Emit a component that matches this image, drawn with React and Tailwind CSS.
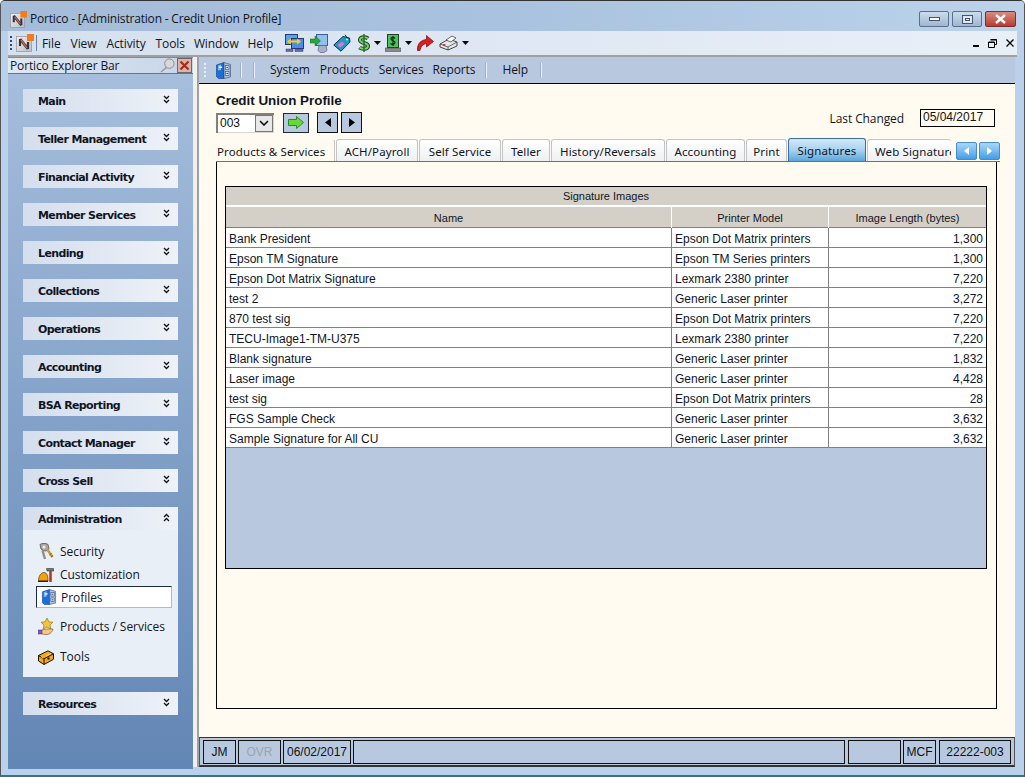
import React from "react";

const Logo = ({ s = 17 }) => (
  <svg width={s} height={s} viewBox="0 0 18 18" className="shrink-0">
    <defs>
      <linearGradient id="lg" x1="0" y1="0" x2="1" y2="1">
        <stop offset="0" stopColor="#f4f2ee" />
        <stop offset="1" stopColor="#b9bcc4" />
      </linearGradient>
    </defs>
    <rect x="0.500" y="2.500" width="15" height="15" fill="url(#lg)" stroke="#8f939c" strokeWidth="0.7" />
    <rect x="11" y="0" width="7" height="7" fill="#f47a1c" />
    <path d="M4 5v7M12 8v7" stroke="#2a3350" strokeWidth="2.200" />
    <path d="M4 5l8 10" stroke="#2a3350" strokeWidth="2.800" />
    <path d="M5 6l6 8" stroke="#e8641c" strokeWidth="1.300" />
  </svg>
);

const Cabinet = ({ s = 17 }) => (
  <svg width={s} height={s} viewBox="0 0 15 17" className="shrink-0">
    <path d="M0.500 3L8 0.500V16.500H2.500L0.500 14.500z" fill="#1b6fd8" stroke="#0d3c8c" strokeWidth="0.6" />
    <path d="M2 3.500L5 2.500V8L2 8.500z" fill="#7db8f4" />
    <path d="M8 0.500L14.500 2.500V15L8 16.500z" fill="#aebfd8" stroke="#2f4a7c" strokeWidth="0.6" />
    <rect x="3" y="4.500" width="3" height="1.500" fill="#eaf3ff" />
    <rect x="9.500" y="3.500" width="3.500" height="4" fill="#d8e0ee" stroke="#2f4a7c" strokeWidth="0.6" />
    <rect x="9.500" y="9.500" width="3.500" height="4" fill="#d8e0ee" stroke="#2f4a7c" strokeWidth="0.6" />
    <rect x="10.500" y="5" width="1.500" height="1" fill="#2f4a7c" />
    <rect x="10.500" y="11" width="1.500" height="1" fill="#2f4a7c" />
  </svg>
);

const Keys = () => (
  <svg width="15" height="17" viewBox="0 0 15 17" className="shrink-0">
    <path d="M1 1.500C3 0 7 0 9 1.500L10 6 7 8 4 7.500 2 6z" fill="#a8a8a4" stroke="#6a6a66" strokeWidth="1" />
    <circle cx="5" cy="4" r="1.500" fill="#f0f0ec" />
    <path d="M3.500 7.500L6 16" stroke="#8e8e8a" strokeWidth="2.400" />
    <path d="M8 6l5.500 8" stroke="#c79a34" strokeWidth="2.600" />
    <path d="M12 14l2-1.500M10.500 12l2-1.500" stroke="#7a5c18" strokeWidth="1" />
  </svg>
);

const HatHammer = () => (
  <svg width="16" height="14" viewBox="0 0 16 14" className="shrink-0">
    <path d="M0.500 13C0.500 8 3 4.500 6 4.500S10 8 10 13z" fill="#f2a20c" stroke="#5c3a00" strokeWidth="0.7" />
    <path d="M0 13.300h10" stroke="#2a1a00" strokeWidth="1.300" />
    <path d="M8.500 0.500H15.500L16 3H9z" fill="#77777a" stroke="#222" strokeWidth="0.5" />
    <path d="M12.500 3v11" stroke="#c8321c" strokeWidth="2.600" />
  </svg>
);

const StarHand = () => (
  <svg width="16" height="17" viewBox="0 0 16 17" className="shrink-0">
    <path d="M9 0l1.900 3.800 4.100.4-3 2.800.9 4.100L9 9l-3.900 2.100.9-4.100-3-2.800 4.100-.4z" fill="#f2c53a" stroke="#8a6a10" strokeWidth="0.6" />
    <rect x="0" y="12" width="4" height="4" fill="#7a5cd0" stroke="#443088" strokeWidth="0.5" />
    <path d="M4 12c3-1 6-1 11-1-1 4-4 5.500-7 5.500-2 0-3-.5-4-.5z" fill="#f6c98a" stroke="#8a5a20" strokeWidth="0.7" />
  </svg>
);

const ToolBox = () => (
  <svg width="16" height="15" viewBox="0 0 16 15" className="shrink-0">
    <path d="M0.500 5.500L10 0.800l5.500 3v5.500L6 14.500 0.500 11z" fill="#f2a818" stroke="#1a1206" strokeWidth="1" />
    <path d="M0.500 5.500L6 8.800l9.500-5M6 8.800v5.700" fill="none" stroke="#1a1206" strokeWidth="1" />
    <path d="M3 6.500L5.500 8M8 6l5-2.500" stroke="#fbe48a" strokeWidth="0.8" />
    <rect x="9.500" y="7.500" width="2" height="2" fill="#1a1206" />
  </svg>
);

const Monitors = () => (
  <svg width="19" height="18" viewBox="0 0 19 18">
    <rect x="0.500" y="0.500" width="12" height="10" fill="#5aa2ee" stroke="#243a78" />
    <rect x="6.500" y="4.500" width="12" height="10" fill="#4f8de0" stroke="#243a78" />
    <path d="M1 15h7v2.500H1zM10 15h8v2.500h-8z" fill="#6a6ea8" stroke="#3a3c78" strokeWidth="0.5" />
    <path d="M3 7.500h12" stroke="#f5d020" strokeWidth="2" />
    <path d="M6 4.500L2 7.500 6 10.500zM12 4.500l4 3-4 3z" fill="#f5d020" />
  </svg>
);
const ArrowMon = () => (
  <svg width="18" height="19" viewBox="0 0 18 19">
    <rect x="6.500" y="0.500" width="11" height="11" fill="#8fc0ee" stroke="#38609c" />
    <path d="M9 11.500h7l1 5-3 2h-4l-2-2z" fill="#a8aecb" stroke="#5a6088" strokeWidth="0.7" />
    <path d="M0 5h5V2l5.500 5-5.500 5V9H0z" fill="#28a838" stroke="#126020" strokeWidth="0.5" />
  </svg>
);
const Tag = () => (
  <svg width="18" height="18" viewBox="0 0 18 18">
    <path d="M0.800 11L10 2.500l6.500 1.500L17 8l-9 9.200z" fill="#1a9ac8" stroke="#0c3050" />
    <path d="M4.500 11l4.500-3.500 2.500 2.500-4.500 3.500z" fill="#f070c0" />
    <path d="M12 0.800l3 4" stroke="#222" fill="none" />
    <circle cx="14" cy="5.500" r="1" fill="#e0f0ff" />
  </svg>
);
const Dollar = () => (
  <svg width="12" height="18" viewBox="0 0 12 18">
    <path d="M10 4.500C8 2.500 2 2.500 2 6s8 2.500 8 6-6 3.500-8.500 1.500" fill="none" stroke="#1c3a24" strokeWidth="4" />
    <path d="M10 4.500C8 2.500 2 2.500 2 6s8 2.500 8 6-6 3.500-8.500 1.500" fill="none" stroke="#66dc58" strokeWidth="2" />
    <path d="M6 0v18" stroke="#2f6a34" strokeWidth="1.500" />
  </svg>
);
const Register = () => (
  <svg width="16" height="18" viewBox="0 0 16 18">
    <rect x="2.500" y="0.500" width="11" height="13" fill="#4ec060" stroke="#20402a" />
    <rect x="0" y="14" width="16" height="3.500" fill="#8a8a8a" stroke="#444" strokeWidth="0.5" />
    <path d="M10 4.500C9 3 6 3 6 5s4 1.500 4 3.500-3 2.500-4.500 1M8 2v10" fill="none" stroke="#0a2a12" strokeWidth="1.200" />
  </svg>
);
const RedArrow = () => (
  <svg width="17" height="16" viewBox="0 0 17 16">
    <path d="M0.500 15.500C0 8.500 4 5 9.500 4.500V0.500L16.500 6.500 9.500 12V8.500C6 9 4 11 3 15.500z" fill="#d81e1e" stroke="#7a0c0c" strokeWidth="0.7" />
  </svg>
);
const Printer = () => (
  <svg width="19" height="16" viewBox="0 0 19 16">
    <path d="M1 9l9-5 8 3v4l-9 4-8-3z" fill="#e8e8e8" stroke="#333" strokeWidth="0.9" />
    <path d="M7 5l6-4 4 2-5 4z" fill="#fff" stroke="#444" strokeWidth="0.8" />
    <rect x="4" y="9" width="2.500" height="1.500" fill="#e83a3a" />
    <path d="M1 9l8 3 9-5M9 12v3" fill="none" stroke="#444" strokeWidth="0.8" />
  </svg>
);

const Caret = () => (
  <svg width="7" height="4" viewBox="0 0 7 4" className="ml-[4px]"><path d="M0 0h7L3.500 4z" fill="#000" /></svg>
);

const Chev = ({ up }) => (
  <svg width="7" height="9" viewBox="0 0 7 9" className={`mb-[2px] ${up ? "rotate-180" : ""}`}>
    <path d="M1 1l2.500 2.500L6 1M1 5l2.500 2.500L6 5" fill="none" stroke="#111" strokeWidth="1.300" />
  </svg>
);

const Grip = ({ c = "#2c4a80" }) => (
  <div className="flex flex-col gap-[2px] shrink-0">
    {[0, 1, 2, 3].map((i) => (
      <div key={i} className="w-[2px] h-[2px]" style={{ background: c }} />
    ))}
  </div>
);

const Sep = ({ cls = "" }) => <div className={`w-[2px] h-[15px] bg-[#e8eef6] border-l border-[#9db0c8] shrink-0 ${cls}`} />;

const GroupLabel = ({ t }) => (
  <span className="pt-[3px] font-['DejaVu_Sans'] font-bold text-[11px] tracking-[-0.62px] text-[#10151f]">{t}</span>
);

const Group = ({ t }) => (
  <div className="h-[23px] flex items-center justify-between pl-[15px] pr-[8px] bg-gradient-to-r from-[#d4deed] to-[#eef2f8]">
    <GroupLabel t={t} />
    <Chev />
  </div>
);

const Item = ({ icon, t, h }) => (
  <div className={`flex items-center gap-[6px] pl-[15px] ${h}`}>
    <div className="w-[16px] flex justify-center shrink-0">{icon}</div>
    <span className="text-[12px] text-[#10151f] font-['Open_Sans'] tracking-[-0.05px]">{t}</span>
  </div>
);

const rows = [
  ["Bank President", "Epson Dot Matrix printers", "1,300"],
  ["Epson TM Signature", "Epson TM Series printers", "1,300"],
  ["Epson Dot Matrix Signature", "Lexmark 2380 printer", "7,220"],
  ["test 2", "Generic Laser printer", "3,272"],
  ["870 test sig", "Epson Dot Matrix printers", "7,220"],
  ["TECU-Image1-TM-U375", "Lexmark 2380 printer", "7,220"],
  ["Blank signature", "Generic Laser printer", "1,832"],
  ["Laser image", "Generic Laser printer", "4,428"],
  ["test sig", "Epson Dot Matrix printers", "28"],
  ["FGS Sample Check", "Generic Laser printer", "3,632"],
  ["Sample Signature for All CU", "Generic Laser printer", "3,632"],
];

const tabs = [
  ["Products & Services", "w-[119px]"],
  ["ACH/Payroll", "w-[82px]"],
  ["Self Service", "w-[82px]"],
  ["Teller", "w-[48px]"],
  ["History/Reversals", "w-[114px]"],
  ["Accounting", "w-[79px]"],
  ["Print", "w-[41px]"],
];

const WinBtn = ({ w, cls, children }) => (
  <div className={`h-[16px] ${w} ${cls} rounded-[2px] border border-[#5a6f8c] flex items-center justify-center`}>{children}</div>
);

const Cell = ({ w, children, cls = "" }) => (
  <div className={`h-[24px] ${w} border border-[#111] flex items-center justify-center text-[12px] shrink-0 ${cls}`}>{children}</div>
);

const gridCols = "grid grid-cols-[446px_157px_157px]";

export default function App() {
  return (
    <div className="w-[1025px] h-[777px] overflow-hidden rounded-t-[5px] flex flex-col bg-[#b9d1ea] border-b-2 border-[#1c7f90] border-t border-t-[#333] border-x border-x-[#555] font-['Liberation_Sans',sans-serif] text-[#111]">
      <div className="h-[30px] shrink-0 flex items-center bg-gradient-to-r from-[#a4bcd8] via-[#a9c2df] to-[#bcd3ea] pl-[9px] pr-[8px] pt-[6px]">
        <Logo s={17} />
        <span className="ml-[3px] text-[12px] font-['Open_Sans'] tracking-[-0.19px] text-[#10151f]">Portico - [Administration - Credit Union Profile]</span>
        <div className="ml-auto flex gap-[3px] items-center">
          <WinBtn w="w-[30px]" cls="bg-gradient-to-b from-[#cddcec] to-[#9fb6d2]">
            <div className="w-[11px] h-[4px] border border-[#45556c] bg-white" />
          </WinBtn>
          <WinBtn w="w-[30px]" cls="bg-gradient-to-b from-[#cddcec] to-[#9fb6d2]">
            <div className="w-[11px] h-[9px] border border-[#45556c] bg-[#dfe8f2] flex items-center justify-center"><div className="w-[5px] h-[3px] border border-[#45556c]" /></div>
          </WinBtn>
          <WinBtn w="w-[31px]" cls="bg-gradient-to-b from-[#d88a80] to-[#b83a30] border-[#7a3030]">
            <svg width="13" height="10" viewBox="0 0 13 10"><path d="M2 1l9 8M11 1l-9 8" stroke="#fff" strokeWidth="2.400" /></svg>
          </WinBtn>
        </div>
      </div>

      <div className="flex-1 min-h-0 flex flex-col mx-[7px] mb-[8px]">
        <div className="h-[26px] shrink-0 flex items-center bg-gradient-to-r from-[#d5e0ee] to-[#e9eff7] border-b-2 border-[#a0a0a0] pl-[2px] text-[12px] font-['Open_Sans'] tracking-[-0.1px] text-[#10151f]">
          <Grip />
          <div className="ml-[4px]"><Logo s={18} /></div>
          <div className="ml-[2px] w-[1px] h-[16px] bg-[#6a84a6]" />
          <span className="ml-[5px] pt-[1px]">File</span>
          <span className="ml-[10px] pt-[1px]">View</span>
          <span className="ml-[10px] pt-[1px]">Activity</span>
          <span className="ml-[10px] pt-[1px]">Tools</span>
          <span className="ml-[9px] pt-[1px]">Window</span>
          <span className="ml-[9px] pt-[1px]">Help</span>
          <div className="ml-[12px] flex items-center">
            <Monitors />
            <div className="ml-[6px]"><ArrowMon /></div>
            <div className="ml-[5px]"><Tag /></div>
            <div className="ml-[7px]"><Dollar /></div>
            <Caret />
            <div className="ml-[4px]"><Register /></div>
            <Caret />
            <div className="ml-[5px]"><RedArrow /></div>
            <div className="ml-[5px]"><Printer /></div>
            <Caret />
          </div>
          <div className="ml-auto flex items-center gap-[9px] pr-[3px]">
            <div className="w-[6px] h-[2px] bg-black mt-[5px]" />
            <svg width="9" height="9" viewBox="0 0 9 9"><path d="M2.500 0.500h6v5h-2M0.500 3h6v5.500h-6zM0.500 3.500h6M2.500 1h6" fill="none" stroke="#000" /></svg>
            <svg width="8" height="8" viewBox="0 0 8 8"><path d="M0.500 0.500l7 7M7.500 0.500l-7 7" stroke="#000" strokeWidth="1.300" /></svg>
          </div>
        </div>

        <div className="flex-1 min-h-0 flex">
          <aside className="w-[185px] shrink-0 flex flex-col -mb-[2px]">
            <div className="h-[17px] shrink-0 flex items-center justify-between pl-[2px] pr-[1px] bg-gradient-to-r from-[#dfe8f3] to-[#c6d5e8] border-b border-[#55799f] border-t border-t-[#8a8a8a]">
              <span className="text-[12px] font-['Open_Sans'] tracking-[-0.15px] text-[#10151f]">Portico Explorer Bar</span>
              <div className="flex items-center gap-[2px]">
                <svg width="15" height="15" viewBox="0 0 16 16"><circle cx="10" cy="6" r="5" fill="#d8d8d8" stroke="#8a8a8a" /><path d="M7 10l-6 5" stroke="#999" strokeWidth="1.500" /></svg>
                <div className="w-[15px] h-[15px] border border-[#6a6a6a] bg-[#d9b4a8] flex items-center justify-center">
                  <svg width="11" height="11" viewBox="0 0 11 11"><path d="M1.500 1.500l8 8M9.500 1.500l-8 8" stroke="#a82c1c" strokeWidth="2.200" /></svg>
                </div>
              </div>
            </div>
            <div className="flex-1 min-h-0 flex flex-col gap-[15px] px-[15px] pt-[15px] bg-gradient-to-b from-[#a6bedc] to-[#6286b5]">
              {["Main", "Teller Management", "Financial Activity", "Member Services", "Lending", "Collections", "Operations", "Accounting", "BSA Reporting", "Contact Manager", "Cross Sell"].map((t) => (
                <Group key={t} t={t} />
              ))}
              <div>
                <div className="h-[23px] flex items-center justify-between pl-[15px] pr-[8px] bg-gradient-to-r from-[#d4deed] to-[#eef2f8]">
                  <GroupLabel t="Administration" />
                  <Chev up />
                </div>
                <div className="bg-[#e9eff6] pt-[10px] pb-[8px]">
                  <Item icon={<Keys />} t="Security" h="h-[23px]" />
                  <Item icon={<HatHammer />} t="Customization" h="h-[23px]" />
                  <div className="ml-[13px] mr-[6px] h-[22px] bg-white border border-[#a8bcd6] border-t-[#1a2a40] border-l-[#1a2a40] flex items-center gap-[4px] pl-[4px]">
                    <Cabinet s={16} />
                    <span className="pt-[1px] text-[12px] text-[#10151f] font-['Open_Sans'] tracking-[-0.05px]">Profiles</span>
                  </div>
                  <Item icon={<StarHand />} t="Products / Services" h="h-[37px]" />
                  <Item icon={<ToolBox />} t="Tools" h="h-[24px]" />
                </div>
              </div>
              <Group t="Resources" />
            </div>
          </aside>

          <div className="w-[6px] shrink-0 bg-[#f0f0f0] border-r-2 border-[#a0a0a0]" />

          <main className="flex-1 min-w-0 flex flex-col mr-[2px]">
            <div className="h-[27px] shrink-0 flex items-center bg-[#b8c9df] border-b border-black pl-[5px] text-[12px] font-['Open_Sans'] tracking-[-0.1px] text-[#10151f]">
              <Grip c="#e8eef6" />
              <div className="ml-[9px]"><Cabinet /></div>
              <Sep cls="ml-[8px]" />
              <Sep cls="ml-[11px]" />
              <span className="ml-[15px]">System</span>
              <span className="ml-[10px]">Products</span>
              <span className="ml-[10px]">Services</span>
              <span className="ml-[9px]">Reports</span>
              <Sep cls="ml-[10px]" />
              <span className="ml-[15px]">Help</span>
              <Sep cls="ml-[12px]" />
            </div>

            <div className="flex-1 min-h-0 flex flex-col bg-[#fffbf0] pl-[17px] pr-[18px] pt-[9px]">
              <div className="flex justify-between items-start h-[46px] shrink-0">
                <div>
                  <div className="h-[15px] pt-[1px] flex items-center font-bold text-[13.4px] text-[#10151f]">Credit Union Profile</div>
                  <div className="mt-[4px] flex items-center">
                    <div className="w-[58px] h-[20px] bg-[#d8d6ce] border-t-2 border-l-2 border-[#808080] flex pr-[1px] pb-[1px]">
                      <div className="flex-1 bg-white text-[12px] pl-[2px] leading-[16px]">003</div>
                      <div className="w-[18px] border border-[#777] bg-[#e8e8e8] flex items-center justify-center">
                        <svg width="10" height="6" viewBox="0 0 10 6"><path d="M1 1l4 4 4-4" fill="none" stroke="#000" strokeWidth="1.500" /></svg>
                      </div>
                    </div>
                    <div className="ml-[9px] w-[26px] h-[20px] bg-[#b8c9df] border border-[#1a2a40] flex items-center justify-center">
                      <svg width="16" height="13" viewBox="0 0 16 13"><path d="M0.500 3.500h8V0.500l7 6-7 6v-3h-8z" fill="#66d83c" stroke="#2c8a20" /></svg>
                    </div>
                    <div className="ml-[8px] w-[21px] h-[21px] bg-[#b8c9df] border border-[#111] flex items-center justify-center">
                      <svg width="6" height="9" viewBox="0 0 6 9"><path d="M6 0v9L0 4.500z" fill="#000" /></svg>
                    </div>
                    <div className="ml-[3px] w-[21px] h-[21px] bg-[#b8c9df] border border-[#111] flex items-center justify-center">
                      <svg width="6" height="9" viewBox="0 0 6 9"><path d="M0 0v9l6-4.500z" fill="#000" /></svg>
                    </div>
                  </div>
                </div>
                <div className="flex items-start mt-[16px] mr-[2px] text-[12px] font-['Open_Sans'] tracking-[-0.1px]">
                  <span className="text-[#10151f] pt-[1px]">Last Changed</span>
                  <div className="ml-[16px] w-[75px] h-[18px] border border-black font-['Liberation_Sans'] tracking-normal pl-[2px] leading-[15px]">05/04/2017</div>
                </div>
              </div>

              <div className="h-[23px] shrink-0 flex items-end -mr-[3px]">
                <div className="flex flex-1 h-[23px] items-end border-b border-[#4a7aa8] font-['Noto_Sans'] text-[11.5px] tracking-[0.12px] text-[#10151f]">
                  {tabs.map(([t, w], i) => (
                    <div key={t} className={`h-[22px] pt-[2px] ${w} shrink-0 mr-[1px] flex items-center rounded-tr-[3px] border-r border-t border-[#c4c4c4] ${i === 0 ? "pl-[1px] bg-[#fffbf0] border-t-transparent" : "justify-center rounded-t-[3px] border-l bg-gradient-to-b from-[#ffffff] to-[#eef0f2]"} `}>{t}</div>
                  ))}
                  <div className="h-[23px] pt-[2px] w-[78px] mr-[1px] shrink-0 flex items-center justify-center rounded-t-[3px] border border-b-0 border-[#3a6ea0] bg-gradient-to-b from-[#d4e8f8] via-[#a8d2f0] to-[#5aa6dc]">Signatures</div>
                  <div className="h-[22px] pt-[2px] w-[84px] shrink-0 pl-[7px] flex items-center rounded-t-[3px] border-t border-l border-[#c4c4c4] bg-gradient-to-b from-[#ffffff] to-[#eef0f2]">
                    <span className="block w-[76px] overflow-hidden whitespace-nowrap">Web Signatures</span>
                  </div>
                  <div className="ml-[5px] flex gap-[2px] mb-[1px]">
                    <div className="w-[21px] h-[18px] rounded-[2px] bg-gradient-to-b from-[#a8d8f8] to-[#3f9ee8] border border-[#4a8ac8] flex items-center justify-center"><svg width="5" height="8" viewBox="0 0 5 8"><path d="M5 0v8L0 4z" fill="#fff" /></svg></div>
                    <div className="w-[21px] h-[18px] rounded-[2px] bg-gradient-to-b from-[#a8d8f8] to-[#3f9ee8] border border-[#4a8ac8] flex items-center justify-center"><svg width="5" height="8" viewBox="0 0 5 8"><path d="M0 0v8l5-4z" fill="#fff" /></svg></div>
                  </div>
                </div>
              </div>

              <div className="h-[547px] shrink-0 border border-t-0 border-black pl-[8px] pr-[9px] pt-[24px]">
                <div className="h-[383px] border border-black bg-[#b8c9df] text-[12px] text-[#10151f] flex flex-col">
                  <div className="h-[20px] pt-[1px] text-[11px] shrink-0 bg-[#d4d0c8] flex items-center justify-center border-b-2 border-white">Signature Images</div>
                  <div className={`${gridCols} h-[21px] shrink-0 bg-[#d4d0c8] text-[11px] text-center leading-[22px] border-b border-[#808080]`}>
                    <div className="border-r border-white">Name</div>
                    <div className="border-r border-white">Printer Model</div>
                    <div>Image Length (bytes)</div>
                  </div>
                  {rows.map((r, i) => (
                    <div key={i} className={`${gridCols} h-[20px] shrink-0 bg-white leading-[22px] border-b border-[#808080]`}>
                      <div className="pl-[3px] border-r border-[#808080] h-[19px]">{r[0]}</div>
                      <div className="pl-[3px] border-r border-[#808080] h-[19px]">{r[1]}</div>
                      <div className="pr-[3px] text-right h-[19px]">{r[2]}</div>
                    </div>
                  ))}
                </div>
              </div>
            </div>

            <div className="h-[30px] shrink-0 bg-[#b8c9df] border-t border-[#333] border-x border-x-[#555] border-b-2 border-b-[#333] flex items-center gap-[2px] pl-[3px] pr-[3px]">
              <Cell w="w-[33px]">JM</Cell>
              <Cell w="w-[43px]" cls="text-[#9aa4b0]">OVR</Cell>
              <Cell w="w-[68px]">06/02/2017</Cell>
              <Cell w="w-[492px]" />
              <Cell w="w-[53px]" cls="ml-[1px]" />
              <Cell w="w-[33px]">MCF</Cell>
              <Cell w="w-[72px]" cls="ml-[1px]">22222-003</Cell>
            </div>
          </main>
        </div>
      </div>
    </div>
  );
}
